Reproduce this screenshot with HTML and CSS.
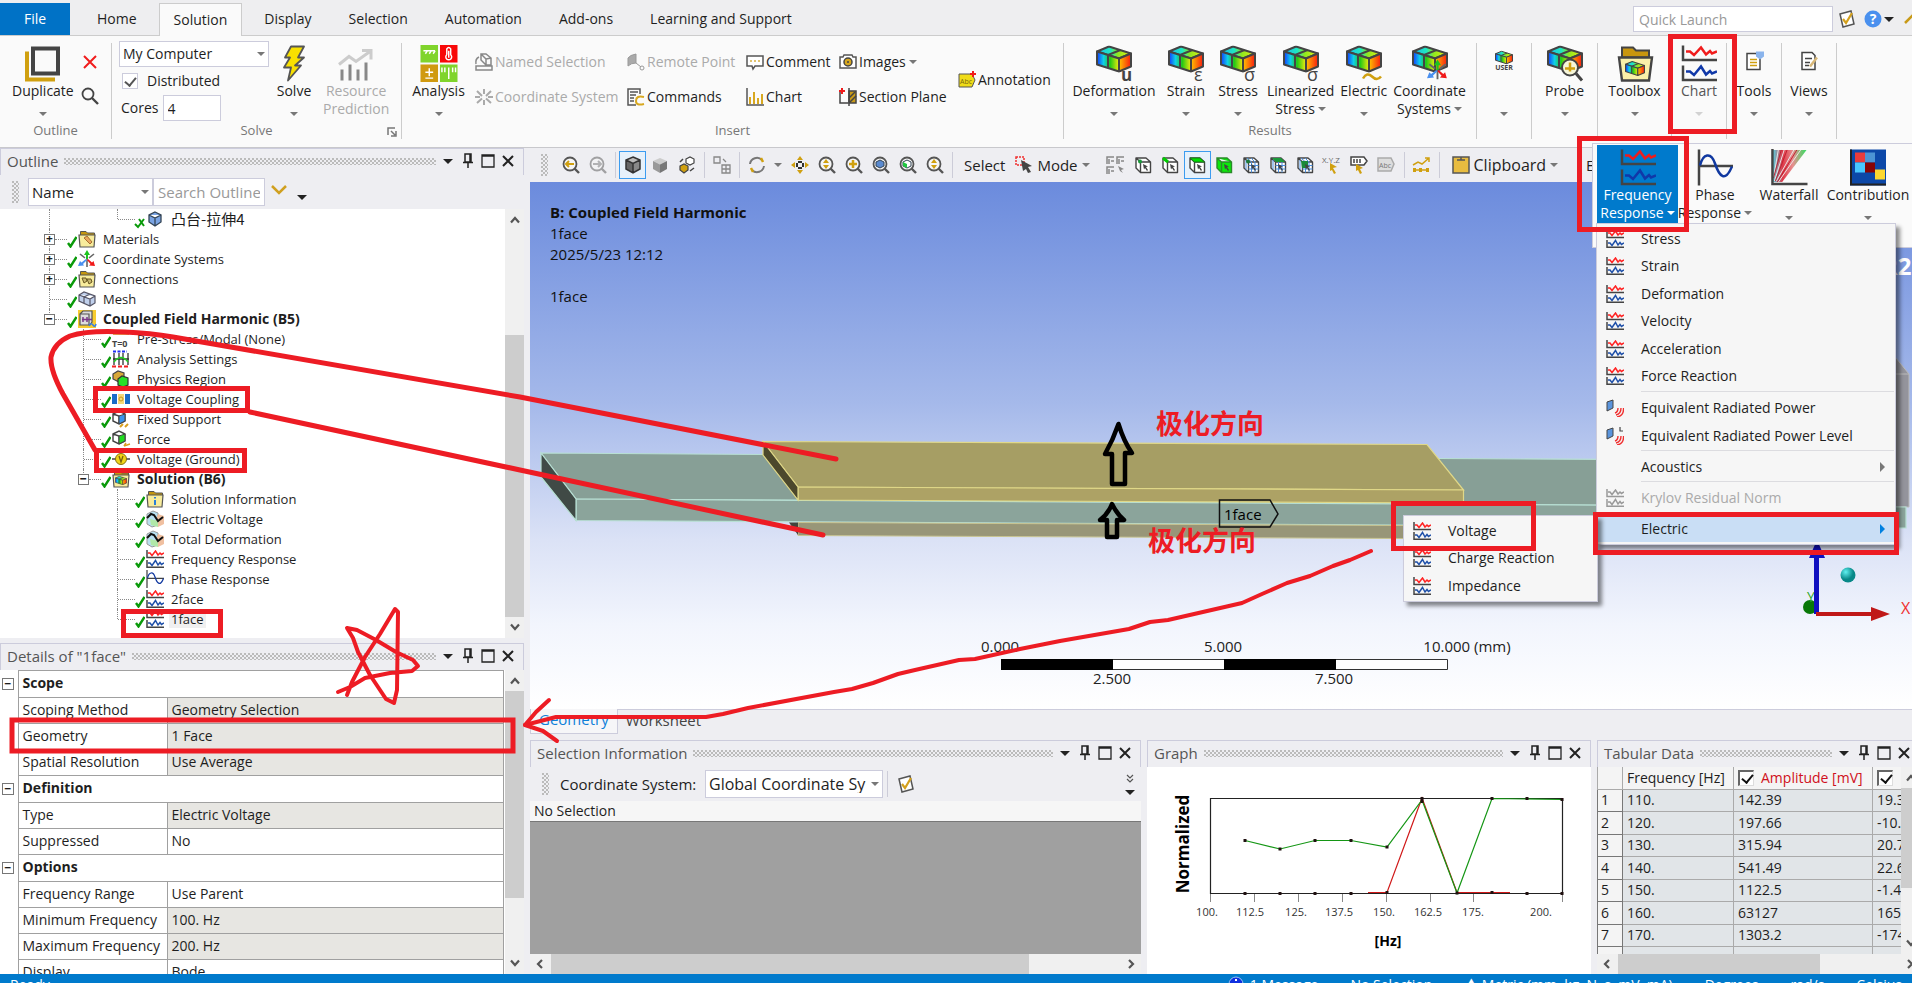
FILE: index.html
```html
<!DOCTYPE html>
<html lang="en">

<head>
  <meta charset="utf-8">
  <title>Mechanical - Coupled Field Harmonic</title>
  <link rel="stylesheet" href="styles.css">
</head>

<body>
  <!-- Shared icons -->
  <svg class="defs" width="0" height="0" aria-hidden="true">
    <defs>
      <linearGradient id="g-front"><stop offset="0" stop-color="#1238ff"/><stop offset=".3" stop-color="#10d0e8"/><stop offset=".6" stop-color="#22c814"/><stop offset="1" stop-color="#f4ec10"/></linearGradient>
      <linearGradient id="g-side"><stop offset="0" stop-color="#ffc400"/><stop offset="1" stop-color="#f81c10"/></linearGradient>
      <linearGradient id="g-top"><stop offset="0" stop-color="#18b8f0"/><stop offset=".4" stop-color="#20e8c0"/><stop offset=".6" stop-color="#8ce820"/><stop offset="1" stop-color="#e8f010"/></linearGradient>
      <linearGradient id="g-fall"><stop offset="0" stop-color="#50d8e8"/><stop offset=".3" stop-color="#e03848"/><stop offset=".6" stop-color="#e89090"/><stop offset="1" stop-color="#30e060"/></linearGradient>
      <symbol id="block" viewBox="0 0 36 27"><g stroke="#444" stroke-width="2" stroke-linejoin="round"><path fill="url(#g-top)" d="M1 6 13 1 35 8 23 13z"/><path fill="url(#g-front)" d="M1 6 23 13V26L1 19z"/><path fill="url(#g-side)" d="M23 13 35 8V21L23 26z"/><path fill="none" d="M12 9.500V22.500M12 9.500 24.500 4.500"/></g></symbol>
      <symbol id="freq" viewBox="0 0 18 18"><path fill="none" stroke="#444" stroke-width="1.500" d="M1 0V7.500H18M1 10V17.200H18"/><path fill="none" stroke="#f22" stroke-width="1.500" d="M2 3H4L6 5.500 9.500 1 12 5 14 3 15.500 4.500 18 3"/><path fill="none" stroke="#1e4fa8" stroke-width="1.500" d="M2 13H4L6 15.500 9.500 10.500 12 15 14 12.500 15.500 14.500 18 13"/></symbol>
      <symbol id="freq-off" viewBox="0 0 18 18"><path fill="none" stroke="#999" stroke-width="1.500" d="M1 0V7.500H18M1 10V17.200H18M2 3H4L6 5.500 9.500 1 12 5 14 3 15.500 4.500 18 3M2 13H4L6 15.500 9.500 10.500 12 15 14 12.500 15.500 14.500 18 13"/></symbol>
      <symbol id="freq-lg" viewBox="0 0 36 36"><path fill="none" stroke="#444" stroke-width="2.500" d="M2 0V14.500H36M2 20V34.500H36"/><path fill="none" stroke="#f01c1c" stroke-width="2.500" d="M5 6H9L13 9.500 20 2 25 9 29 5.500 31 8 36 6"/><path fill="none" stroke="#1038a8" stroke-width="2.500" d="M5 26H9L13 29.500 20 21 25 29 29 25.500 31 28 36 26"/></symbol>
      <symbol id="check" viewBox="0 0 10 12"><path fill="none" stroke="#0a9a0a" stroke-width="2.400" d="M1 7 3.500 10.500 9.500 1"/></symbol>
      <symbol id="folder" viewBox="0 0 18 18"><path fill="#c4960e" stroke="#555" d="M2.500 5V1.500H8L9.500 3H16.500V5"/><path fill="#f8ec9c" stroke="#555" stroke-width="1.200" d="M1 5H17L16 17H2z"/></symbol>
      <symbol id="cube" viewBox="0 0 18 18"><path fill="#fff" stroke="#444" stroke-width="1.400" stroke-linejoin="round" d="M2 2H12L16.500 6V16.500H6.500L2 12zM2 2 6.500 6H16.500M6.500 6V16.500"/></symbol>
      <symbol id="pick" viewBox="0 0 18 18"><path fill="#444" d="M9 8 14 10.500 12 11 14 14 13 15 11 12 10 13.500z"/></symbol>
      <symbol id="grid-lines" viewBox="0 0 18 18"><path fill="none" stroke="#4a8ee0" d="M9.500 6V16.500M13 6V16.500M6.500 9.500H16.500M6.500 13H16.500M5 2 9.500 6M9 2 13 6M4 4V13.500"/></symbol>
      <symbol id="mag" viewBox="0 0 18 18"><circle cx="8" cy="8" r="6.500" fill="#f6f6f6" stroke="#555" stroke-width="1.800"/><path stroke="#555" stroke-width="2.400" d="M12.500 12.500 17 17"/></symbol>
      <symbol id="iso" viewBox="0 0 18 18"><path fill="#888" d="M9 1 16 4V13L9 17 2 13V4z"/><path fill="#bbb" d="M9 1 16 4 9 7.500 2 4z"/><path fill="#666" d="M2 4 9 7.500V17L2 13z"/></symbol>
      <symbol id="axes" viewBox="0 0 18 18"><path stroke="#666" stroke-width="1.600" d="M2 4 7 8M16 4 11 8M9 9V17"/><path fill="#1ec41e" d="M9 0 12 5H10V9H8V5H6z"/><path fill="#4a90f0" d="M0 16 2 11 3.500 12.500 8 9 9 10 5 14 6 15.500z"/><path fill="#f01818" d="M17 16 11 15.500 12.500 14 9 10 10 9 14 12.500 15.500 11z"/></symbol>
      <symbol id="axes-off" viewBox="0 0 18 18"><path stroke="#aaa" stroke-width="2" d="M2 3 7 8M16 3 11 8M9 1V6M9 17V12M2 15 7 10.500M16 15 11 10.500M0 9H5M13 9H18"/></symbol>
      <symbol id="pin" viewBox="0 0 12 16"><path fill="none" stroke="#222" stroke-width="1.500" d="M3 1H9V9H3zM1 9.500H11M6 10V15M8 1V9"/></symbol>
      <symbol id="max" viewBox="0 0 14 14"><path fill="none" stroke="#222" stroke-width="1.300" d="M1 1H13V13H1zM1 2H13"/></symbol>
      <symbol id="close" viewBox="0 0 12 12"><path stroke="#222" stroke-width="2" d="M1 1 11 11M11 1 1 11"/></symbol>
      <symbol id="tick-box" viewBox="0 0 18 18"><path fill="#fff" stroke="#555" stroke-width="1.500" d="M2 4 13 1 16 14 5 17z"/><path fill="none" stroke="#d4a01c" stroke-width="2.200" d="M5 9 8 13 14 3"/></symbol>
      <symbol id="phase" viewBox="0 0 36 36"><path fill="none" stroke="#444" stroke-width="2.500" d="M2 0V36M2 16.500H36"/><path fill="none" stroke="#1038a0" stroke-width="2.500" d="M3 16C6 4 14 2 18 14S28 34 35 17"/></symbol>
      <symbol id="wave-cube" viewBox="0 0 18 18"><path fill="#b8e0f0" stroke="#999" d="M1 4 7 1 12 3V15L6 17 1 14z"/><path fill="#f0c0a0" d="M12 4 18 6V14L12 17 8 15z"/><path fill="#b0e8a8" d="M4 9 12 11V17L5 15z"/><path fill="none" stroke="#111" stroke-width="2" d="M1 8 5 4 8 5 12 11 17 7"/></symbol>
      <symbol id="up" viewBox="0 0 10 10"><path fill="none" stroke="#555" stroke-width="2.200" d="M1 7.500 5 3 9 7.500"/></symbol>
      <symbol id="down" viewBox="0 0 10 10"><path fill="none" stroke="#555" stroke-width="2.200" d="M1 2.500 5 7 9 2.500"/></symbol>
      <symbol id="left" viewBox="0 0 10 10"><path fill="none" stroke="#555" stroke-width="2.200" d="M7 1 3 5 7 9"/></symbol>
      <symbol id="right" viewBox="0 0 10 10"><path fill="none" stroke="#555" stroke-width="2.200" d="M3 1 7 5 3 9"/></symbol>
      <symbol id="radiate" viewBox="0 0 18 18"><path fill="#5a94dc" stroke="#444" d="M1 3 7 1V9L1 12z"/><path fill="none" stroke="#f03030" stroke-width="1.400" d="M9 14Q12 13 12 9M10 16Q15 15 15 9M11 18Q18 17 17.500 9"/></symbol>
    </defs>
  </svg>

  <div class="app">
    <!-- Ribbon tabs -->
    <header class="tabs">
      <button class="tab file">File</button>
      <button class="tab">Home</button>
      <button class="tab active">Solution</button>
      <button class="tab">Display</button>
      <button class="tab">Selection</button>
      <button class="tab">Automation</button>
      <button class="tab">Add-ons</button>
      <button class="tab">Learning and Support</button>
      <div class="quick">
        <input type="text" placeholder="Quick Launch" aria-label="Quick Launch">
        <svg width="18" height="18"><use href="#tick-box"/></svg>
        <svg class="help" width="18" height="18" viewBox="0 0 18 18"><circle cx="9" cy="9" r="8.500" fill="#4a90ee"/><text x="9" y="14" text-anchor="middle" font-size="14" font-weight="bold" fill="#fff">?</text></svg>
        <i class="caret dark"></i>
        <svg class="collapse" width="16" height="10" viewBox="0 0 16 10"><path fill="none" stroke="#c89a18" stroke-width="2.500" d="M1 9 8 2 15 9"/></svg>
      </div>
    </header>

    <!-- Ribbon -->
    <div class="ribbon">
      <section class="group g-outline">
        <div class="group-body">
          <button class="big">
            <svg width="36" height="36" viewBox="0 0 36 36"><path fill="none" stroke="#d0a010" stroke-width="4" d="M2 6V34H30"/><path fill="#fafafa" stroke="#444" stroke-width="4" d="M8 3H33V28H8z"/></svg>
            <span>Duplicate</span><i class="caret"></i>
          </button>
          <div class="mini">
            <button aria-label="Delete"><svg width="16" height="16" viewBox="0 0 16 16"><path stroke="#f01c1c" stroke-width="2" d="M2 2 14 14M14 2 2 14"/></svg></button>
            <button aria-label="Find"><svg width="18" height="18" viewBox="0 0 18 18"><circle cx="7" cy="7" r="5.500" fill="none" stroke="#444" stroke-width="1.800"/><path stroke="#444" stroke-width="2.400" d="M11 11 17 17"/></svg></button>
          </div>
        </div>
        <h3>Outline</h3>
      </section>

      <section class="group g-solve">
        <div class="group-body">
          <div class="fields">
            <div class="select"><select aria-label="Solve on"><option>My Computer</option></select></div>
            <label class="dist"><input type="checkbox" checked> Distributed</label>
            <label class="cores">Cores <input type="text" value="4"></label>
          </div>
          <button class="big">
            <svg width="36" height="36" viewBox="0 0 36 36"><path fill="#f8e000" stroke="#555" stroke-width="1.800" stroke-linejoin="round" d="M15 1H28L22 12H28L19 20H25L12 35 15 22H8L14 12H9z"/></svg>
            <span>Solve</span><i class="caret"></i>
          </button>
          <button class="big off">
            <svg width="36" height="36" viewBox="0 0 36 36"><path stroke="#888" stroke-width="3" d="M4 35V24M12 35V19M20 35V24M28 35V17"/><path fill="none" stroke="#ccc" stroke-width="3" d="M1 19 11 11 18 16 32 6M24 5H33V14"/></svg>
            <span>Resource<br>Prediction</span>
          </button>
        </div>
        <h3>Solve</h3>
        <svg class="launcher" width="10" height="10" viewBox="0 0 10 10"><path fill="none" stroke="#777" stroke-width="1.500" d="M1 8V1H8M4 4 8 8M9 4V9H4"/></svg>
      </section>

      <section class="group g-insert">
        <div class="group-body">
          <button class="big">
            <svg width="38" height="38" viewBox="0 0 38 38"><path fill="#80d42c" d="M0 0H18V18H0zM20 20H38V38H20z"/><path fill="#f80808" d="M20 0H38V18H20z"/><path fill="#d09a10" d="M0 20H18V38H0z"/><path fill="none" stroke="#fff" stroke-width="1.500" d="M3 6H15M5 9 7 6M9 9 11 6M13 9 15 6M5 28H13M9 24V32M5 34H13M22 23V28M25 23V28M29 23V35M33 23V28M36 23V28"/><path fill="none" stroke="#fff" stroke-width="1.500" d="M27 10V4Q29 1 31 4V10A3 3 0 1 1 27 10M29 6V13"/></svg>
            <span>Analysis</span><i class="caret"></i>
          </button>
          <div class="cols">
            <button class="item off"><svg width="18" height="18" viewBox="0 0 18 18"><path fill="none" stroke="#888" stroke-width="1.500" d="M1 13H17V17H1zM6 1H11L16 5V12H11L6 7zM6 1 11 6V12M11 6 16 5M1 11Q0 6 4 4"/></svg>Named Selection</button>
            <button class="item off"><svg width="18" height="18" viewBox="0 0 18 18"><path fill="#aaa" stroke="#999" d="M1 5Q3 2 9 1V10Q4 10 1 13z"/><path stroke="#999" d="M9 10 14 14"/><circle cx="15" cy="15" r="2" fill="none" stroke="#999"/></svg>Remote Point</button>
            <button class="item"><svg width="18" height="18" viewBox="0 0 18 18"><path fill="#fff" stroke="#555" stroke-width="1.500" d="M1 3H17V13H9L7 16 6 13H1z"/><path stroke="#d8b040" stroke-width="1.500" stroke-dasharray="2 2" d="M4 8H15"/></svg>Comment</button>
            <button class="item"><svg width="18" height="18" viewBox="0 0 18 18"><path fill="#fff" stroke="#555" stroke-width="1.500" d="M1 4H4L5 2H13L14 4H17V15H1z"/><circle cx="9" cy="9" r="4" fill="#d8a820" stroke="#444" stroke-width="1.500"/><circle cx="9" cy="9" r="1" fill="#444"/></svg>Images<i class="caret"></i></button>
            <button class="item off"><svg width="18" height="18"><use href="#axes-off"/></svg>Coordinate System</button>
            <button class="item"><svg width="18" height="18" viewBox="0 0 18 18"><path fill="none" stroke="#555" stroke-width="1.500" d="M9 17H1V1H13V6M3 4H11M3 7H9M3 10H7M3 13H7"/><path fill="none" stroke="#d8a820" stroke-width="2" d="M17 9Q9 7 9 13 9 18 17 16"/></svg>Commands</button>
            <button class="item"><svg width="18" height="18" viewBox="0 0 18 18"><path fill="none" stroke="#555" stroke-width="1.500" d="M1 0V17H18"/><path stroke="#d8a820" stroke-width="2" d="M4 16V9M8 16V4M12 16V10M16 16V6"/></svg>Chart</button>
            <button class="item"><svg width="18" height="18" viewBox="0 0 18 18"><path fill="none" stroke="#444" stroke-width="1.500" d="M5 3H1V15H9"/><path fill="#c89a18" stroke="#444" stroke-width="1.500" d="M10 3H17V15H10z"/><path stroke="#444" stroke-width="1.500" d="M10 0V18M10 10 16 4M10 15 17 8"/><path stroke="#f01c1c" stroke-width="2" d="M0 3H6M3 0V6"/></svg>Section Plane</button>
          </div>
          <button class="item annotation"><svg width="18" height="18" viewBox="0 0 18 18"><path fill="#f0dc18" stroke="#555" d="M1 3H14L17 9 14 16H1z"/><text x="2" y="13" font-size="7" fill="#7a6a10">Abc</text><path stroke="#f01c1c" stroke-width="2" d="M12 3H18M15 0V6"/></svg>Annotation</button>
        </div>
        <h3>Insert</h3>
      </section>

      <section class="group g-results">
        <div class="group-body">
          <button class="big"><svg width="36" height="36" viewBox="0 0 36 36"><use href="#block" width="36" height="27"/><text x="25" y="35" font-size="17" font-weight="bold" fill="#444">u</text></svg><span>Deformation</span><i class="caret"></i></button>
          <button class="big"><svg width="36" height="36" viewBox="0 0 36 36"><use href="#block" width="36" height="27"/><text x="26" y="35" font-size="18" fill="#444">ε</text></svg><span>Strain</span><i class="caret"></i></button>
          <button class="big"><svg width="36" height="36" viewBox="0 0 36 36"><use href="#block" width="36" height="27"/><text x="24" y="35" font-size="18" fill="#444">σ</text></svg><span>Stress</span><i class="caret"></i></button>
          <button class="big"><svg width="36" height="36" viewBox="0 0 36 36"><use href="#block" width="36" height="27"/><text x="24" y="35" font-size="18" fill="#444">σ</text></svg><span>Linearized<br>Stress<i class="caret in"></i></span></button>
          <button class="big"><svg width="36" height="36" viewBox="0 0 36 36"><use href="#block" width="36" height="27"/><path fill="none" stroke="#d0a010" stroke-width="2.500" d="M17 33Q21 26 26 31T35 31"/></svg><span>Electric</span><i class="caret"></i></button>
          <button class="big"><svg width="36" height="36" viewBox="0 0 36 36"><use href="#block" width="36" height="27"/><use href="#axes" x="15" y="13" width="21" height="23"/></svg><span>Coordinate<br>Systems<i class="caret in"></i></span></button>
        </div>
        <h3>Results</h3>
      </section>

      <section class="group g-one">
        <button class="big"><svg width="36" height="36" viewBox="0 0 36 36"><use href="#block" x="9" y="5" width="18" height="14"/><text x="18" y="24" text-anchor="middle" font-size="7" font-weight="bold" fill="#444">USER</text></svg><span>&nbsp;</span><i class="caret"></i></button>
      </section>
      <section class="group g-probe">
        <button class="big"><svg width="36" height="36" viewBox="0 0 36 36"><use href="#block" width="36" height="27"/><circle cx="23" cy="22" r="8" fill="#f6f6d8" stroke="#444" stroke-width="2"/><path stroke="#444" stroke-width="3" d="M29 28 35 35"/><path stroke="#d0a010" stroke-width="2.500" d="M18 23H28M23 17V26"/></svg><span>Probe</span><i class="caret"></i></button>
      </section>
      <section class="group g-toolbox">
        <button class="big"><svg width="36" height="36" viewBox="0 0 36 36"><path fill="#c8960e" stroke="#444" stroke-width="2" d="M5 12V2H16L19 5H32V12z"/><path fill="#faf0a8" stroke="#444" stroke-width="2.400" d="M2 12H35L32 35H5z"/><use href="#block" x="8" y="15" width="20" height="16"/></svg><span>Toolbox</span><i class="caret"></i></button>
      </section>
      <section class="group g-one">
        <button class="big pressed"><svg width="36" height="36"><use href="#freq-lg"/></svg><span>Chart</span><i class="caret"></i></button>
      </section>
      <section class="group g-one">
        <button class="big"><svg width="36" height="36" viewBox="0 0 36 36"><path fill="#fff" stroke="#444" stroke-width="1.500" d="M11 8H20L24 12V24H11z"/><path stroke="#d0a010" stroke-width="1.500" d="M14 14H21M14 17H21M14 20H21"/><path fill="#8ab4ec" d="M20 6H28V11L24 14 20 11z"/></svg><span>Tools</span><i class="caret"></i></button>
      </section>
      <section class="group g-one">
        <button class="big"><svg width="36" height="36" viewBox="0 0 36 36"><path fill="#fff" stroke="#444" stroke-width="1.500" d="M11 7H21L24 10V24H11z"/><path stroke="#444" stroke-width="1.500" d="M14 13H21M14 17H19M14 20H18"/><path stroke="#d8b878" stroke-width="2.500" d="M19 21 26 12"/></svg><span>Views</span><i class="caret"></i></button>
      </section>
    </div>

    <main class="workspace">
      <aside class="side">
        <!-- Outline tree -->
        <section class="panel outline">
          <div class="panel-head">
            <h2>Outline</h2><span class="dots"></span>
            <button aria-label="Menu"><i class="caret dark"></i></button><button aria-label="Pin"><svg width="12" height="16"><use href="#pin"/></svg></button><button aria-label="Maximize"><svg width="14" height="14"><use href="#max"/></svg></button><button aria-label="Close"><svg width="12" height="12"><use href="#close"/></svg></button>
          </div>
          <div class="filter">
            <span class="grip"></span>
            <div class="select"><select aria-label="Filter by"><option>Name</option></select></div>
            <input type="text" placeholder="Search Outline" aria-label="Search Outline">
            <svg class="expand" width="16" height="10" viewBox="0 0 16 10"><path fill="none" stroke="#d0a020" stroke-width="2.500" d="M1 1 8 8 15 1"/></svg>
            <i class="caret dark"></i>
          </div>
          <div class="scroll-area">
            <ul class="tree">
              <li>
                <ul class="deep"><li><div class="row cjk"><i class="stub"></i><svg width="10" height="12" viewBox="0 0 10 12"><path fill="none" stroke="#0a9a0a" stroke-width="2" d="M0 8 3 11 9 3M4 3 9 10"/></svg><svg width="18" height="18" viewBox="0 0 18 18"><path fill="#7aa4e4" stroke="#345" stroke-width="1.300" d="M9 2 15 5V12L9 16 3 12V5zM3 5 9 8 15 5M9 8V16"/></svg><span>凸台-拉伸4</span></div></li></ul>
              </li>
              <li><div class="row"><b class="box">+</b><i class="dash"></i><svg width="10" height="12"><use href="#check"/></svg><svg width="18" height="18" viewBox="0 0 18 18"><use href="#folder"/><path fill="#e8a860" stroke="#a67030" d="M6 8 9 6 14 12 12 14z"/></svg><span>Materials</span></div></li>
              <li><div class="row"><b class="box">+</b><i class="dash"></i><svg width="10" height="12"><use href="#check"/></svg><svg width="18" height="18"><use href="#axes"/></svg><span>Coordinate Systems</span></div></li>
              <li><div class="row"><b class="box">+</b><i class="dash"></i><svg width="10" height="12"><use href="#check"/></svg><svg width="18" height="18" viewBox="0 0 18 18"><use href="#folder"/><path fill="#c8b870" stroke="#665520" d="M4 8 8 8 9 11 6 13zM9 9 13 9 14 12 11 14z"/></svg><span>Connections</span></div></li>
              <li><div class="row"><i class="stub"></i><svg width="10" height="12"><use href="#check"/></svg><svg width="18" height="18" viewBox="0 0 18 18"><path fill="#c0d0ec" stroke="#556" stroke-width="1.200" d="M1 5 6 2 17 6V13L12 16 1 11zM1 5 12 9 17 6M12 9V16M6 7V13M6 7 12 4"/></svg><span>Mesh</span></div></li>
              <li>
                <div class="row bold"><b class="box">−</b><i class="dash"></i><svg width="10" height="12"><use href="#check"/></svg><svg width="18" height="18" viewBox="0 0 18 18"><path fill="#f8cc30" d="M0 0H18V18H0z"/><path fill="#ddd" stroke="#555" stroke-width="1.200" d="M2 4 5 1H14V12L12 15H2zM2 4H11V15"/><path stroke="#7a3a8a" stroke-width="1.500" d="M5 7V12M9 7V12M4 9.500H14"/><path fill="none" stroke="#3a80e0" stroke-width="1.500" d="M11 16Q13 12 15 15T18 14"/></svg><span>Coupled Field Harmonic (B5)</span></div>
                <ul>
                  <li><div class="row"><i class="stub"></i><svg width="10" height="12"><use href="#check"/></svg><svg width="18" height="18" viewBox="0 0 18 18"><path stroke="#d8a020" stroke-width="1.500" d="M1 4H17M13 1 17 4"/><text x="0" y="17" font-size="9" font-weight="bold" fill="#444">T=0</text></svg><span>Pre-Stress/Modal (None)</span></div></li>
                  <li><div class="row"><i class="stub"></i><svg width="10" height="12"><use href="#check"/></svg><svg width="18" height="18" viewBox="0 0 18 18"><path fill="none" stroke="#333" stroke-width="1.300" d="M2 3V15M7 3V15M11 3V15M16 3V15M1 9H17"/><path stroke="#2030f0" stroke-width="2" stroke-dasharray="3 1.500" d="M1 1.500H15"/><path stroke="#f02020" stroke-width="2" stroke-dasharray="4 2" d="M0 16.500H18"/><path fill="none" stroke="#20d020" stroke-width="1.500" d="M2 12Q9 3 16 12"/></svg><span>Analysis Settings</span></div></li>
                  <li><div class="row"><i class="stub"></i><svg width="10" height="12"><use href="#check"/></svg><svg width="18" height="18" viewBox="0 0 18 18"><path fill="#d8a838" stroke="#444" stroke-width="1.200" d="M1 4 6 1 12 3V10L7 12 1 9z"/><path fill="#28e028" stroke="#333" stroke-width="1.200" d="M6 9 10 6 16 8V15L11 17 6 15z"/></svg><span>Physics Region</span></div></li>
                  <li><div class="row"><i class="stub"></i><svg width="10" height="12"><use href="#check"/></svg><svg width="18" height="18" viewBox="0 0 18 18"><path fill="#1a6cc8" d="M0 4H5V14H0zM13 4H18V14H13z"/><path fill="#f4d878" d="M6 4H12V14H6z"/><circle cx="9" cy="9" r="2" fill="none" stroke="#c8961c"/></svg><span>Voltage Coupling</span></div></li>
                  <li><div class="row"><i class="stub"></i><svg width="10" height="12"><use href="#check"/></svg><svg width="18" height="18" viewBox="0 0 18 18"><path fill="#fff" stroke="#444" stroke-width="1.400" d="M1 4 7 1 13 4V11L7 14 1 11zM1 4 7 6V14"/><path fill="#3a94ec" stroke="#444" d="M7 6 13 4V11L7 14z"/><path stroke="#d8a020" stroke-width="2" d="M8 17 11 14M13 17 16 14"/></svg><span>Fixed Support</span></div></li>
                  <li><div class="row"><i class="stub"></i><svg width="10" height="12"><use href="#check"/></svg><svg width="18" height="18" viewBox="0 0 18 18"><path fill="#fff" stroke="#444" stroke-width="1.400" d="M1 4 7 1 13 4V11L7 14 1 11zM1 4 7 6V14"/><path fill="#20dc20" stroke="#444" d="M7 6 13 4V11L7 14z"/><path stroke="#d8a020" stroke-width="1.500" d="M12 16 18 14M12 16 14 13"/></svg><span>Force</span></div></li>
                  <li><div class="row"><i class="stub"></i><svg width="10" height="12"><use href="#check"/></svg><svg width="18" height="18" viewBox="0 0 18 18"><path stroke="#444" stroke-width="1.500" d="M0 9H18"/><circle cx="9" cy="9" r="5.500" fill="#f0d418" stroke="#887010"/><path fill="none" stroke="#776010" stroke-width="1.300" d="M7 6 9 12 11 6"/></svg><span>Voltage (Ground)</span></div></li>
                  <li>
                    <div class="row bold"><b class="box">−</b><i class="dash"></i><svg width="10" height="12"><use href="#check"/></svg><svg width="18" height="18" viewBox="0 0 18 18"><use href="#folder"/><use href="#block" x="3" y="6" width="12" height="9"/></svg><span>Solution (B6)</span></div>
                    <ul>
                      <li><div class="row"><i class="stub"></i><svg width="10" height="12"><use href="#check"/></svg><svg width="18" height="18" viewBox="0 0 18 18"><use href="#folder"/><path stroke="#2a80d8" stroke-width="2" d="M9 7V8.500M9 10V15"/></svg><span>Solution Information</span></div></li>
                      <li><div class="row"><i class="stub"></i><svg width="10" height="12"><use href="#check"/></svg><svg width="18" height="18"><use href="#wave-cube"/></svg><span>Electric Voltage</span></div></li>
                      <li><div class="row"><i class="stub"></i><svg width="10" height="12"><use href="#check"/></svg><svg width="18" height="18"><use href="#wave-cube"/></svg><span>Total Deformation</span></div></li>
                      <li><div class="row"><i class="stub"></i><svg width="10" height="12"><use href="#check"/></svg><svg width="18" height="18"><use href="#freq"/></svg><span>Frequency Response</span></div></li>
                      <li><div class="row"><i class="stub"></i><svg width="10" height="12"><use href="#check"/></svg><svg width="18" height="18"><use href="#phase"/></svg><span>Phase Response</span></div></li>
                      <li><div class="row"><i class="stub"></i><svg width="10" height="12"><use href="#check"/></svg><svg width="18" height="18"><use href="#freq"/></svg><span>2face</span></div></li>
                      <li><div class="row current"><i class="stub"></i><svg width="10" height="12"><use href="#check"/></svg><svg width="18" height="18"><use href="#freq"/></svg><span>1face</span></div></li>
                    </ul>
                  </li>
                </ul>
              </li>
            </ul>
            <div class="vscroll s-tree"><svg width="10" height="10"><use href="#up"/></svg><div class="track"><div class="thumb"></div></div><svg width="10" height="10"><use href="#down"/></svg></div>
          </div>
        </section>

        <!-- Details -->
        <section class="panel details">
          <div class="panel-head">
            <h2>Details of "1face"</h2><span class="dots"></span>
            <button aria-label="Menu"><i class="caret dark"></i></button><button aria-label="Pin"><svg width="12" height="16"><use href="#pin"/></svg></button><button aria-label="Maximize"><svg width="14" height="14"><use href="#max"/></svg></button><button aria-label="Close"><svg width="12" height="12"><use href="#close"/></svg></button>
          </div>
          <div class="scroll-area">
            <div class="props-wrap">
              <table class="props">
                <colgroup><col class="c-exp"><col class="c-name"><col></colgroup>
                <tr class="cat"><td><b class="box">−</b></td><th colspan="2">Scope</th></tr>
                <tr><td></td><td>Scoping Method</td><td class="ro">Geometry Selection</td></tr>
                <tr><td></td><td>Geometry</td><td class="ro">1 Face</td></tr>
                <tr><td></td><td>Spatial Resolution</td><td class="ro">Use Average</td></tr>
                <tr class="cat"><td><b class="box">−</b></td><th colspan="2">Definition</th></tr>
                <tr><td></td><td>Type</td><td class="ro">Electric Voltage</td></tr>
                <tr><td></td><td>Suppressed</td><td>No</td></tr>
                <tr class="cat"><td><b class="box">−</b></td><th colspan="2">Options</th></tr>
                <tr><td></td><td>Frequency Range</td><td>Use Parent</td></tr>
                <tr><td></td><td>Minimum Frequency</td><td class="ro">100. Hz</td></tr>
                <tr><td></td><td>Maximum Frequency</td><td class="ro">200. Hz</td></tr>
                <tr><td></td><td>Display</td><td>Bode</td></tr>
              </table>
            </div>
            <div class="vscroll s-details"><svg width="10" height="10"><use href="#up"/></svg><div class="track"><div class="thumb"></div></div><svg width="10" height="10"><use href="#down"/></svg></div>
          </div>
        </section>
      </aside>

      <div class="center">
        <!-- Graphics toolbar -->
        <div class="toolbar">
          <span class="grip"></span>
          <button aria-label="Previous view"><svg width="18" height="18" viewBox="0 0 18 18"><use href="#mag"/><path stroke="#d0a010" stroke-width="2" d="M4 8H12M7 5 4 8 7 11" fill="none"/></svg></button>
          <button class="off" aria-label="Next view"><svg width="18" height="18" viewBox="0 0 18 18" opacity=".5"><use href="#mag"/><path stroke="#777" stroke-width="2" d="M4 8H12M9 5 12 8 9 11" fill="none"/></svg></button>
          <i class="sep"></i>
          <button class="on" aria-label="Shaded with edges"><svg width="18" height="18" viewBox="0 0 18 18"><use href="#iso"/><path fill="none" stroke="#333" stroke-width="1.500" d="M9 1 16 4V13L9 17 2 13V4zM2 4 9 7.500 16 4M9 7.500V17"/></svg></button>
          <button aria-label="Shaded"><svg width="18" height="18" viewBox="0 0 18 18"><path fill="#ccc" d="M9 2 16 5 9 8.500 2 5z"/><path fill="#999" d="M2 5 9 8.500V17L2 13z"/><path fill="#777" d="M16 5 9 8.500V17L16 13z"/></svg></button>
          <button aria-label="Swap bodies"><svg width="18" height="18" viewBox="0 0 18 18"><path fill="#fff" stroke="#444" stroke-width="1.200" d="M8 3 12 1 16 3V7L12 9 8 7z"/><path fill="#d0a010" stroke="#444" stroke-width="1.200" d="M2 10 6 8 10 10V14L6 17 2 14z"/><path fill="none" stroke="#444" stroke-width="1.500" d="M2 6 5 3M12 15 16 12"/></svg></button>
          <i class="sep"></i>
          <button aria-label="Windows"><svg width="18" height="18" viewBox="0 0 18 18"><path fill="none" stroke="#888" stroke-width="1.300" d="M1 1H7V7H1zM9 9H17V17H9zM13 9V17M9 13H17M10 3 13 6"/></svg></button>
          <i class="sep"></i>
          <button aria-label="Rotate"><svg width="18" height="18" viewBox="0 0 18 18"><path fill="none" stroke="#777" stroke-width="2" d="M2 8A7 7 0 0 1 14 4M16 10A7 7 0 0 1 4 14"/><path stroke="#d0a010" stroke-width="2.500" d="M13 2 15 6M3 12 5 16"/></svg></button>
          <i class="caret"></i>
          <button aria-label="Pan"><svg width="18" height="18" viewBox="0 0 18 18"><path fill="#d0a010" d="M9 0 12 4H6zM9 18 12 14H6zM0 9 4 6V12zM18 9 14 6V12z"/><path fill="#333" d="M7 5H11V7H7zM7 11H11V13H7zM5 7H7V11H5zM11 7H13V11H11z"/></svg></button>
          <button aria-label="Zoom"><svg width="18" height="18" viewBox="0 0 18 18"><use href="#mag"/><path fill="#d0a010" d="M8 3 11 7H5zM8 13 11 9H5z"/></svg></button>
          <button aria-label="Zoom in"><svg width="18" height="18" viewBox="0 0 18 18"><use href="#mag"/><path stroke="#d0a010" stroke-width="2.500" d="M4 8H12M8 4V12"/></svg></button>
          <button aria-label="Zoom to fit"><svg width="18" height="18" viewBox="0 0 18 18"><use href="#mag"/><path fill="#5a8ad0" stroke="#345" d="M8 4 12 6V10L8 12 4 10V6z"/></svg></button>
          <button aria-label="Zoom to selection"><svg width="18" height="18" viewBox="0 0 18 18"><use href="#mag"/><path fill="#fff" stroke="#345" d="M8 4 12 6V10L8 12 4 10V6z"/><path fill="#20c840" d="M4 6 8 8V12L4 10z"/></svg></button>
          <button aria-label="Box zoom"><svg width="18" height="18" viewBox="0 0 18 18"><use href="#mag"/><path fill="#d0a010" d="M8 3 11 7H5zM8 13 11 9H5z"/></svg></button>
          <i class="sep"></i>
          <span class="text">Select</span>
          <button class="wide"><svg width="18" height="18" viewBox="0 0 18 18"><path fill="none" stroke="#f03030" stroke-width="1.500" stroke-dasharray="2 1" d="M1 1H9V9H1z"/><path fill="#444" d="M6 4 17 10 13 11 16 16 13 17 11 13 8 15z"/></svg>Mode<i class="caret"></i></button>
          <button aria-label="Select pattern"><svg width="20" height="18" viewBox="0 0 20 18"><path fill="none" stroke="#888" stroke-width="1.500" d="M1 8V1H8M3 8V3M5 5H8M11 8V1H18M13 8V3M15 5H18M1 18V11H8M3 18V13M5 15H8"/><path fill="#888" d="M12 10 18 13 15 14 17 17 14 15z"/></svg></button>
          <button aria-label="Vertex"><svg width="18" height="18" viewBox="0 0 18 18"><use href="#cube"/><use href="#pick"/><circle cx="6" cy="5.500" r="2" fill="#1a9a3a"/></svg></button>
          <button aria-label="Edge"><svg width="18" height="18" viewBox="0 0 18 18"><use href="#cube"/><use href="#pick"/><path stroke="#0c0" stroke-width="3" d="M2 2 7 6"/></svg></button>
          <button class="on" aria-label="Face"><svg width="18" height="18" viewBox="0 0 18 18"><use href="#cube"/><path fill="#00e000" stroke="#1a7a1a" d="M2 2H12L16.500 6H6.500z"/><use href="#pick"/></svg></button>
          <button aria-label="Body"><svg width="18" height="18" viewBox="0 0 18 18"><path fill="#0ce80c" stroke="#2a8a2a" stroke-width="1.400" d="M2 2H12L16.500 6V16.500H6.500L2 12zM2 2 6.500 6H16.500M6.500 6V16.500"/><use href="#pick"/></svg></button>
          <button aria-label="Node"><svg width="18" height="18" viewBox="0 0 18 18"><use href="#cube"/><use href="#grid-lines"/><circle cx="6" cy="5.500" r="2" fill="#1a7a3a"/><use href="#pick"/></svg></button>
          <button aria-label="Element face"><svg width="18" height="18" viewBox="0 0 18 18"><use href="#cube"/><use href="#grid-lines"/><path fill="#1a9a3a" d="M3 2H12L16 6H7z"/><use href="#pick"/></svg></button>
          <button aria-label="Element"><svg width="18" height="18" viewBox="0 0 18 18"><use href="#cube"/><use href="#grid-lines"/><path fill="#1a8a3a" d="M5 5H12V12H6z"/><use href="#pick"/></svg></button>
          <button aria-label="Coordinates"><svg width="20" height="18" viewBox="0 0 20 18"><text x="0" y="7" font-size="8" fill="#666">X.Y.Z</text><path fill="#d0a010" d="M8 7 15 11 11 12 14 17 12 18 10 14 8 15z"/></svg></button>
          <button aria-label="Label"><svg width="18" height="18" viewBox="0 0 18 18"><path fill="#fff" stroke="#444" stroke-width="1.500" d="M1 1H14L17 5 14 9H1z"/><path stroke="#444" stroke-width="1.500" d="M4 3V7M7 3V7M10 3V7"/><path fill="#d0a010" d="M6 8 13 12 10 13 12 17 10 18 8 14 6 15z"/></svg></button>
          <button aria-label="Annotation label"><svg width="18" height="18" viewBox="0 0 18 18"><path fill="#ddd" stroke="#aaa" stroke-width="1.500" d="M1 2H14L17 8 14 15H1z"/><text x="2" y="12" font-size="7" fill="#777">Abc</text></svg></button>
          <i class="sep"></i>
          <button aria-label="Chart points"><svg width="18" height="18" viewBox="0 0 18 18"><path fill="none" stroke="#d0a010" stroke-width="1.500" d="M1 9 6 6 10 8 17 2M13 2H17V6M1 14H17"/><path fill="#d0a010" d="M1 12H4V16H1zM7 12H10V16H7zM14 12H17V16H14z"/></svg></button>
          <i class="sep"></i>
          <button class="wide clip"><svg width="18" height="18" viewBox="0 0 18 18"><path fill="#e8bc40" stroke="#555" stroke-width="1.500" d="M1 1H17V17H1z"/><path stroke="#555" stroke-width="1.500" d="M5 4H13M9 1V4"/></svg>Clipboard<i class="caret"></i></button>
          <span class="text">[ Empty ]</span>
        </div>

        <!-- 3D view -->
        <div class="viewport">
          <svg class="scene" viewBox="530 182 1382 527" preserveAspectRatio="xMinYMin slice">
            <defs>
              <radialGradient id="ball" cx=".35" cy=".3"><stop offset="0" stop-color="#60f0f0"/><stop offset="1" stop-color="#088888"/></radialGradient>
            </defs>
            <!-- block at the far end -->
            <path fill="#94949c" stroke="#bbb" d="M1880 374V507H1909V374L1896 358 1880 358z"/>
            <path fill="none" stroke="#bbb" d="M1890 374H1909"/>
            <!-- plate -->
            <g stroke="#b8e0d4" stroke-width="1.200">
              <path fill="#879f96" d="M541 453 763 454.500 1439 458.500 1890 461V507L576 499z"/>
              <path fill="#8ba49b" d="M576 499 1906 507V528L576 520.500z"/>
              <path fill="#404a46" d="M541 453 576 499V520.500L541 477z"/>
            </g>
            <!-- patches -->
            <path fill="#989678" stroke="#c8c490" d="M798 522.500 1500 526V539L798 535.500z"/>
            <path fill="#40443c" d="M789 522.500H798V535z"/>
            <g stroke="#e0d888" stroke-width="1.200">
              <path fill="#a69e64" d="M763 441.500 1427 444.500 1463.500 490 798 487z"/>
              <path fill="#ada265" d="M798 487 1463.500 490V503L798 500z"/>
              <path fill="#4c482c" d="M763 441.500 798 487V500L763 455z"/>
            </g>
            <!-- face label -->
            <path fill="none" stroke="#111" stroke-width="1.500" d="M1219.500 500H1270L1278 514 1270 527H1219.500z"/>
            <text x="1224" y="520" font-size="15">1face</text>
            <!-- ruler -->
            <path fill="#fff" stroke="#333" d="M1001.500 659.500H1447.500V669.500H1001.500z"/>
            <path d="M1001 659H1113V670H1001zM1224 659H1336V670H1224z"/>
            <g font-size="15" text-anchor="middle" fill="#222">
              <text x="1000" y="652">0.000</text><text x="1223" y="652">5.000</text><text x="1467" y="652">10.000 (mm)</text>
              <text x="1112" y="684">2.500</text><text x="1334" y="684">7.500</text>
            </g>
            <!-- triad -->
            <circle cx="1810" cy="607" r="7" fill="#087808"/>
            <text x="1807" y="602" font-size="14" fill="#2ca82c">Y</text>
            <path fill="#1010c0" d="M1814 614V558H1809L1817 540 1825 558H1819V614z"/>
            <path fill="#c01818" d="M1816 612H1871V607L1890 614 1871 621V616H1816z"/>
            <circle cx="1848" cy="575" r="7.500" fill="url(#ball)"/>
            <text x="1901" y="614" font-size="16" fill="#f03030">X</text>
            <text x="1882" y="275" font-size="24" font-weight="bold" fill="#fff">R2</text>
          </svg>
          <div class="caption"><b>B: Coupled Field Harmonic</b><br>1face<br>2025/5/23 12:12<br><br>1face</div>
        </div>
        <div class="view-tabs"><button class="active">Geometry</button><button>Worksheet</button></div>

        <div class="bottom">
          <!-- Selection information -->
          <section class="panel">
            <div class="panel-head">
              <h2>Selection Information</h2><span class="dots"></span>
              <button aria-label="Menu"><i class="caret dark"></i></button><button aria-label="Pin"><svg width="12" height="16"><use href="#pin"/></svg></button><button aria-label="Maximize"><svg width="14" height="14"><use href="#max"/></svg></button><button aria-label="Close"><svg width="12" height="12"><use href="#close"/></svg></button>
            </div>
            <div class="cs-bar">
              <span class="grip"></span>
              <label for="cs">Coordinate System:</label>
              <div class="select"><select id="cs"><option>Global Coordinate Sy</option></select></div>
              <i class="sep"></i>
              <svg width="18" height="18"><use href="#tick-box"/></svg>
              <span class="more"><svg width="8" height="10" viewBox="0 0 8 10"><path fill="none" stroke="#555" stroke-width="1.200" d="M1 1 4 4 7 1M1 5 4 8 7 5"/></svg><i class="caret dark"></i></span>
            </div>
            <div class="no-sel">No Selection</div>
            <div class="gray"></div>
            <div class="hscroll s-info"><svg width="10" height="10"><use href="#left"/></svg><div class="track"><div class="thumb"></div></div><svg width="10" height="10"><use href="#right"/></svg></div>
          </section>

          <!-- Graph -->
          <section class="panel">
            <div class="panel-head">
              <h2>Graph</h2><span class="dots"></span>
              <button aria-label="Menu"><i class="caret dark"></i></button><button aria-label="Pin"><svg width="12" height="16"><use href="#pin"/></svg></button><button aria-label="Maximize"><svg width="14" height="14"><use href="#max"/></svg></button><button aria-label="Close"><svg width="12" height="12"><use href="#close"/></svg></button>
            </div>
            <div class="graph">
              <svg viewBox="1147 767 444 207" preserveAspectRatio="xMinYMin meet">
                <path fill="none" stroke="#222" stroke-width="1.200" d="M1210.500 798.500H1562.500V893.500H1210.500z"/>
                <path stroke="#888" d="M1210.500 894V902M1254.500 894V902M1298.500 894V902M1342.500 894V902M1386.500 894V902M1430.500 894V902M1473.500 894V902M1562.500 894V902"/>
                <path fill="none" stroke="#d01818" stroke-width="1.200" d="M1368 892.500H1387L1422 798 1457 892.500H1510"/>
                <path fill="none" stroke="#149614" stroke-width="1.200" d="M1245 840.500 1280 849 1315 840.500H1351L1387 847 1422 800 1457 893 1492 798.500 1562 799.500"/>
                <g fill="#201010">
                  <path d="M1243.500 839h3v3h-3zM1278.500 847.500h3v3h-3zM1313.500 839h3v3h-3zM1349.500 839h3v3h-3zM1385.500 845.500h3v3h-3zM1420.500 797h3v6h-3zM1455.500 891.500h3v3h-3zM1490.500 797h3v3h-3zM1525.500 797h3v3h-3zM1560.500 798h3v3h-3z"/>
                  <path d="M1243.500 892h3v3h-3zM1278.500 892h3v3h-3zM1313.500 892h3v3h-3zM1349.500 892h3v3h-3zM1385.500 891h3v3h-3zM1490.500 891h3v3h-3zM1525.500 892h3v3h-3zM1560.500 892h3v3h-3z"/>
                </g>
                <g font-size="11" text-anchor="middle" fill="#333">
                  <text x="1207" y="916">100.</text><text x="1250" y="916">112.5</text><text x="1296" y="916">125.</text><text x="1339" y="916">137.5</text>
                  <text x="1384" y="916">150.</text><text x="1428" y="916">162.5</text><text x="1473" y="916">175.</text><text x="1541" y="916">200.</text>
                </g>
                <text x="1388" y="946" font-size="14" font-weight="bold" text-anchor="middle">[Hz]</text>
                <text transform="translate(1189 844) rotate(-90)" font-size="17" font-weight="bold" text-anchor="middle">Normalized</text>
              </svg>
            </div>
          </section>

          <!-- Tabular data -->
          <section class="panel tabular">
            <div class="panel-head">
              <h2>Tabular Data</h2><span class="dots"></span>
              <button aria-label="Menu"><i class="caret dark"></i></button><button aria-label="Pin"><svg width="12" height="16"><use href="#pin"/></svg></button><button aria-label="Maximize"><svg width="14" height="14"><use href="#max"/></svg></button><button aria-label="Close"><svg width="12" height="12"><use href="#close"/></svg></button>
            </div>
            <div class="scroll-area">
              <div class="data-wrap">
                <table class="data">
                  <colgroup><col class="c-num"><col class="c-freq"><col class="c-amp"><col class="c-phase"></colgroup>
                  <thead><tr><th></th><th>Frequency [Hz]</th><th><label class="amp"><input type="checkbox" checked> Amplitude [mV]</label></th><th><input type="checkbox" checked aria-label="Phase"></th></tr></thead>
                  <tbody>
                    <tr><th>1</th><td>110.</td><td>142.39</td><td>19.3</td></tr>
                    <tr><th>2</th><td>120.</td><td>197.66</td><td>-10.</td></tr>
                    <tr><th>3</th><td>130.</td><td>315.94</td><td>20.7</td></tr>
                    <tr><th>4</th><td>140.</td><td>541.49</td><td>22.6</td></tr>
                    <tr><th>5</th><td>150.</td><td>1122.5</td><td>-1.4</td></tr>
                    <tr><th>6</th><td>160.</td><td>63127</td><td>165.</td></tr>
                    <tr><th>7</th><td>170.</td><td>1303.2</td><td>-174</td></tr>
                    <tr><th></th><td></td><td></td><td></td></tr>
                  </tbody>
                </table>
              </div>
              <div class="vscroll s-data"><svg width="10" height="10"><use href="#up"/></svg><div class="track"><div class="thumb"></div></div><svg width="10" height="10"><use href="#down"/></svg></div>
            </div>
            <div class="hscroll s-tab"><svg width="10" height="10"><use href="#left"/></svg><div class="track"><div class="thumb"></div></div><svg width="10" height="10"><use href="#right"/></svg></div>
          </section>
        </div>
      </div>
    </main>

    <footer class="status">
      <span>Ready</span>
      <span class="msg"><svg width="16" height="16" viewBox="0 0 16 16"><circle cx="8" cy="8" r="7" fill="#1030e0" stroke="#9cc4f4"/><path stroke="#fff" stroke-width="2" d="M8 3V5M8 7V13"/></svg>1 Message</span>
      <span>No Selection</span>
      <span>▲ Metric (mm, kg, N, s, mV, mA)</span>
      <span>Degrees</span>
      <span>rad/s</span>
      <span>Celsius</span>
    </footer>

    <!-- Chart gallery -->
    <div class="gallery">
      <button class="big sel"><svg width="36" height="36"><use href="#freq-lg"/></svg><span>Frequency<br>Response<i class="caret in"></i></span></button>
      <button class="big"><svg width="36" height="36"><use href="#phase"/></svg><span>Phase<br>Response<i class="caret in"></i></span></button>
      <button class="big"><svg width="38" height="38" viewBox="0 0 38 38"><path fill="url(#g-fall)" d="M2 1H37L12 34H2z"/><path stroke="#e8e8e8" d="M4 33 14 1M6 33 24 1M8 34 31 1M3 30 8 1"/><path stroke="#c02030" d="M5 33 17 1M7 34 27 1M3 30 11 1"/><path fill="none" stroke="#444" stroke-width="2.500" d="M2 0V36H38"/></svg><span>Waterfall</span><i class="caret"></i></button>
      <button class="big"><svg width="36" height="36" viewBox="0 0 36 36"><path fill="#0c48a8" d="M0 0H36V36H0z"/><path fill="#e83c3c" d="M5 3H15V13H5z"/><path fill="#4c94d4" d="M15 3H25V13H15z"/><path fill="#48c8ff" d="M5 13H15V23H5z"/><path fill="#880404" d="M15 13H25V23H15z"/><path fill="#fcd830" d="M25 20H35V30H25z"/><path fill="none" stroke="#222" stroke-width="2" d="M1 0V35H36"/></svg><span>Contribution</span><i class="caret"></i></button>
    </div>
    <div class="menu main-menu">
      <button><svg width="18" height="18"><use href="#freq"/></svg>Stress</button>
      <button><svg width="18" height="18"><use href="#freq"/></svg>Strain</button>
      <button><svg width="18" height="18"><use href="#freq"/></svg>Deformation</button>
      <button><svg width="18" height="18"><use href="#freq"/></svg>Velocity</button>
      <button><svg width="18" height="18"><use href="#freq"/></svg>Acceleration</button>
      <button><svg width="18" height="18"><use href="#freq"/></svg>Force Reaction</button>
      <hr>
      <button><svg width="18" height="18"><use href="#radiate"/></svg>Equivalent Radiated Power</button>
      <button><svg width="18" height="18" viewBox="0 0 18 18"><use href="#radiate"/><path fill="none" stroke="#444" stroke-width="1.200" d="M14 0V4H17"/></svg>Equivalent Radiated Power Level</button>
      <hr>
      <button class="sub"><i class="blank"></i>Acoustics</button>
      <hr>
      <button disabled><svg width="18" height="18"><use href="#freq-off"/></svg>Krylov Residual Norm</button>
      <hr>
      <button class="sub hot"><i class="blank"></i>Electric</button>
    </div>
    <div class="menu sub-menu">
      <button><svg width="18" height="18"><use href="#freq"/></svg>Voltage</button>
      <button><svg width="18" height="18"><use href="#freq"/></svg>Charge Reaction</button>
      <button><svg width="18" height="18"><use href="#freq"/></svg>Impedance</button>
    </div>

    <!-- Hand-drawn marks -->
    <svg class="marks" width="1912" height="983">
      <g fill="none" stroke="#ed1c24" stroke-width="5">
        <path d="M1670.500 36.500H1734.500V131.500H1670.500z"/>
        <path d="M1579.500 138.500H1686.500V229.500H1579.500z"/>
        <path d="M95.500 388.500H247.500V410.500H95.500z"/>
        <path d="M96.500 450.500H244.500V470.500H96.500z"/>
        <path d="M123.500 611.500H220.500V635.500H123.500z"/>
        <path d="M12 720H513V751H12z"/>
        <path d="M1393.500 503.500H1533.500V548.500H1393.500z"/>
        <path d="M1595.500 514.500H1896.500V552.500H1595.500z"/>
      </g>
      <g fill="none" stroke="#ed1c24" stroke-width="5" stroke-linecap="round" stroke-linejoin="round">
        <path d="M95 450 63 394Q50 370 51 357 54 343 70 336 88 330 125 332 150 333 173 337L520 397 836 459"/>
        <path d="M250 412 520 470 823 535"/>
        <path stroke-width="4" d="M1371 551 1350 560 1333 566 1310 576 1287 583 1262 594 1242 603 1168 620 1150 622 1129 629 1060 641 1020 649 975 659 959 660 915 670 898 674 873 683 852 689 834 692 748 708 723 714 706 717H556L525 725"/>
        <path stroke-width="4" d="M549 700 536 712 525 725 543 731 557 741"/>
        <path stroke-width="4" d="M347 695 352 682 365 657 380 634 395 609 398 612 397 690 394 703 386 699 370 675 358 652 353 638 347 628 357 630 376 640 396 652 413 660 418 666 412 671 390 673 365 678 350 687 338 692"/>
      </g>
      <g fill="none" stroke="#000" stroke-width="4.500" stroke-linejoin="round">
        <path d="M1112 484V454H1105Q1113 440 1118.500 424 1124 442 1132 453H1125V484z"/>
        <path d="M1107 537V520H1100Q1108 514 1112 504 1117 514 1124 520H1117V537z"/>
      </g>
      <g class="hand" font-size="27" font-weight="bold" fill="#ed1c24">
        <text x="1156" y="434">极化方向</text>
        <text x="1148" y="551">极化方向</text>
      </g>
    </svg>
  </div>
</body>
</html>
```

FILE: styles.css
```css
* {
  box-sizing: border-box;
}

body {
  margin: 0;
  font-family: "Open Sans", "Noto Sans", "Noto Sans CJK SC", sans-serif;
  font-size: 14px;
  line-height: 18px;
  color: #1e1e1e;
  background-color: #eeeef2;
}

button, input, select {
  font: inherit;
  color: inherit;
}

button {
  border: none;
  padding: 0;
  background: none;
  white-space: nowrap;
}

h2, h3 {
  margin: 0;
  font-weight: normal;
}

svg {
  display: block;
  flex: none;
  overflow: visible;
}

.defs {
  position: absolute;
}

.app {
  position: relative;
  display: grid;
  grid-template-rows: 36px 112px 1fr 9px;
  grid-template-columns: minmax(0, 1fr);
  height: 100vh;
  overflow: hidden;
}

.caret {
  flex: none;
  display: block;
  width: 0;
  height: 0;
  border: 4px solid transparent;
  border-top-color: #777;
  border-bottom: none;
}

.caret.dark {
  border-width: 5px 5px 0;
  border-top-color: #222;
}

.caret.in {
  display: inline-block;
  margin-left: 3px;
  vertical-align: 3px;
}

/* tabs */
.tabs {
  display: flex;
  gap: 7px;
  padding-top: 3px;
  border-bottom: 1px solid #ccc;
  background-color: #eeeef0;
}

.tab {
  padding: 0 15px;
}

.tab.file {
  width: 70px;
  margin-right: 5px;
  background-color: #0072c6;
  color: white;
}

.tab.active {
  margin-bottom: -1px;
  padding: 0 14px;
  border: 1px solid #ccc;
  border-bottom: none;
  background-color: #fafafa;
}

.quick {
  display: flex;
  align-items: center;
  margin-left: auto;
  margin-right: -8px;
  gap: 5px;
}

.quick input {
  width: 200px;
  height: 26px;
  padding: 0 5px;
  border: 1px solid #ccccdc;
  background-color: white;
}

.quick .help {
  margin-left: 3px;
}

.quick .caret {
  margin-left: -3px;
}

.quick .collapse {
  margin-left: 5px;
}

::placeholder {
  color: #999;
  opacity: 1;
}

/* ribbon */
.ribbon {
  display: flex;
  padding: 7px 0 8px;
  border-bottom: 1px solid #c8c8cc;
  background-color: #fafafa;
}

.group {
  position: relative;
  display: flex;
  flex-direction: column;
  justify-content: space-between;
  border-right: 1px solid #ccc;
}

.group-body {
  display: flex;
}

.group h3 {
  font-size: 13px;
  text-align: center;
  color: #777;
}

.g-outline { width: 112px; }
.g-solve { width: 290px; }
.g-insert { width: 662px; }
.g-results { width: 413px; }
.g-one { width: 55px; }
.g-probe { width: 66px; }
.g-toolbox { width: 74px; }

.big {
  display: flex;
  flex-direction: column;
  align-items: center;
  min-width: 52px;
  padding: 2px 3px 0;
}

.big > .caret {
  margin-top: 12px;
}

.big svg {
  height: 37px;
}

.off {
  color: #aaa;
}

.pressed {
  color: #555;
}

.pressed > .caret {
  opacity: .3;
}

.g-outline .group-body {
  padding-left: 9px;
  gap: 4px;
}

.mini {
  display: flex;
  flex-direction: column;
  gap: 17px;
  padding-top: 11px;
}

.mini button {
  display: flex;
  justify-content: center;
  width: 18px;
}

.fields {
  width: 156px;
  padding-left: 7px;
}

.select {
  position: relative;
}

.select::after {
  content: "";
  position: absolute;
  right: 4px;
  top: 50%;
  margin-top: -2px;
  border: 4px solid transparent;
  border-top-color: #777;
  border-bottom: none;
  pointer-events: none;
}

.select select {
  appearance: none;
  width: 100%;
  height: 28px;
  padding: 0 3px;
  border: 1px solid #ccccdc;
  border-radius: 0;
  background-color: white;
}

.fields .select {
  width: 150px;
  margin: -2px 0 4px;
}

.fields .select select {
  height: 26px;
}

.dist {
  display: flex;
  align-items: center;
  gap: 9px;
  height: 20px;
  padding-left: 3px;
}

.cores {
  display: flex;
  align-items: center;
  gap: 4px;
  padding: 4px 0 0 2px;
}

.cores input {
  width: 58px;
  height: 26px;
  padding: 0 4px;
  border: 1px solid #ccccdc;
}

input[type="checkbox"] {
  appearance: none;
  flex: none;
  position: relative;
  width: 16px;
  height: 16px;
  margin: 0;
  border: 1px solid #ccccdc;
  background-color: white;
}

input[type="checkbox"]::after {
  content: "";
  position: absolute;
  left: 4px;
  top: 1px;
  width: 5px;
  height: 9px;
  border: solid #555;
  border-width: 0 2px 2px 0;
  transform: rotate(40deg);
}

.launcher {
  position: absolute;
  right: 4px;
  bottom: 2px;
}

.cols {
  display: grid;
  grid-template-columns: 152px 119px 93px 119px;
  grid-auto-rows: 35px;
  margin: 1px 0 0 8px;
}

.g-insert .group-body {
  padding-left: 8px;
}

.g-insert .big {
  width: 57px;
}

.item {
  display: flex;
  align-items: center;
  gap: 2px;
}

.item .caret {
  margin-left: 1px;
}

.annotation {
  height: 73px;
}

.g-results .group-body {
  padding-left: 4px;
}

.g-results .big:first-child {
  width: 92px;
}

/* panels */
.workspace {
  display: grid;
  grid-template-columns: 524px minmax(0, 1fr);
  column-gap: 6px;
  min-height: 0;
}

.side {
  display: grid;
  grid-template-rows: 490px minmax(0, 1fr);
  row-gap: 5px;
  min-height: 0;
}

.panel {
  display: flex;
  flex-direction: column;
  min-width: 0;
  min-height: 0;
}

.panel-head {
  flex: none;
  display: flex;
  align-items: center;
  height: 27px;
  padding: 0 5px 2px 6px;
  border: 1px solid #ccccdc;
  border-bottom: none;
  font-size: 15px;
  color: #555;
}

.panel-head h2 {
  font-size: 15px;
  white-space: nowrap;
}

.panel-head button {
  display: flex;
  justify-content: center;
  width: 20px;
}

.dots {
  flex: 1;
  height: 7px;
  margin: 0 2px 0 6px;
}

.dots, .grip {
  background-image: radial-gradient(circle at 1px 1px, #bbb 1px, transparent 1px), radial-gradient(circle at 3px 3px, #bbb 1px, transparent 1px);
  background-size: 4px 4px;
}

.grip {
  flex: none;
  width: 7px;
  height: 22px;
}

.filter {
  display: flex;
  align-items: center;
  height: 34px;
  padding-left: 12px;
  font-size: 15px;
}

.filter .select {
  width: 125px;
  margin-left: 9px;
}

.filter input {
  width: 112px;
  height: 28px;
  padding: 0 4px;
  border: 1px solid #ccccdc;
}

.filter .expand {
  margin: 0 10px 4px 6px;
}

.filter .caret {
  margin-top: 10px;
}

.scroll-area {
  flex: 1;
  display: flex;
  min-height: 0;
  background-color: white;
}

.vscroll {
  flex: none;
  display: flex;
  flex-direction: column;
  align-items: center;
  width: 19px;
  padding: 6px 0;
  gap: 5px;
  background-color: #f0f0f0;
}

.hscroll {
  flex: none;
  display: flex;
  align-items: center;
  height: 20px;
  padding: 0 5px;
  gap: 6px;
  background-color: #f0f0f0;
}

.track {
  flex: 1;
  align-self: stretch;
  display: flex;
}

.vscroll .track {
  flex-direction: column;
}

.thumb {
  background-color: #cdcdcd;
}

.s-tree .thumb { height: 73%; margin-top: auto; }
.s-details .thumb { height: 79%; }
.s-data .thumb { height: 69%; }
.s-info .thumb { width: 84%; }
.s-tab .thumb { width: 72%; }

/* tree */
.tree {
  flex: 1;
  padding: 0;
  font-size: 13px;
}

.tree, .tree ul {
  margin: 0;
  list-style-type: none;
}

.tree {
  padding-left: 44px;
}

.tree ul {
  padding-left: 34px;
}

.tree ul.deep {
  padding-left: 68px;
}

.tree li {
  position: relative;
}

.tree li::before {
  content: "";
  position: absolute;
  left: 5px;
  top: 0;
  bottom: 0;
  border-left: 1px dotted #888;
}

.tree li:last-child::before {
  bottom: auto;
  height: 10px;
}

.row {
  display: flex;
  align-items: center;
  height: 20px;
  white-space: nowrap;
}

.row svg:first-of-type {
  margin: 6px 1px 0 0;
}

.row span {
  margin-left: 5px;
  padding: 0 2px;
}

.row.bold {
  font-weight: bold;
  font-size: 14px;
}

.row.cjk {
  font-size: 15px;
  font-family: "Noto Sans CJK SC", sans-serif;
}

.current span {
  background-color: #f0f0f0;
}

.box {
  position: relative;
  flex: none;
  width: 11px;
  height: 11px;
  border: 1px solid #777;
  background-color: white;
  font-size: 12px;
  line-height: 8px;
  text-align: center;
}

.dash, .stub {
  width: 12px;
  border-top: 1px dotted #888;
}

.stub {
  width: 17px;
  margin-left: 6px;
}

/* details */
.props-wrap {
  flex: 1;
  overflow: hidden;
}

.props {
  table-layout: fixed;
  width: 504px;
  border-collapse: collapse;
}

.c-exp { width: 18px; }
.c-name { width: 149px; }

.props td, .props th {
  height: 26px;
  padding: 0 0 2px 4px;
  border: 1px solid #a0a0a0;
  text-align: left;
  white-space: nowrap;
}

.props .cat td, .props .cat th {
  height: 27px;
}

.props td:first-child {
  padding: 0 0 0 2px;
  border: none;
}

.props .box {
  display: block;
  width: 12px;
  height: 12px;
  font-size: 12px;
  line-height: 9px;
}

.props .ro {
  background-color: #e7e6e2;
}

/* graphics area */
.center {
  display: grid;
  grid-template-rows: 34px minmax(0, 1fr) 31px 234px;
  min-width: 0;
  min-height: 0;
}

.toolbar {
  display: flex;
  align-items: center;
  padding-left: 11px;
  overflow: hidden;
  font-size: 15px;
  white-space: nowrap;
}

.toolbar .grip {
  margin-right: 9px;
}

.toolbar button {
  flex: none;
  display: flex;
  align-items: center;
  justify-content: center;
  width: 27px;
  height: 28px;
  border: 1px solid transparent;
}

.toolbar > .caret {
  margin: 0 4px;
}

.toolbar .on {
  border-color: #3c9cf0;
  background-color: #e6f1fb;
}

.toolbar .wide {
  width: auto;
  gap: 4px;
  padding: 0 12px 0 9px;
}

.toolbar .clip {
  padding: 0 6px 0 8px;
  font-size: 16px;
}

.toolbar .text {
  padding: 0 0 0 8px;
}

.toolbar .clip + .text {
  padding-left: 12px;
}

.sep {
  flex: none;
  width: 1px;
  height: 26px;
  margin: 0 3px 0 4px;
  background-color: #ccccd8;
}

.viewport {
  position: relative;
  overflow: hidden;
  background-image: linear-gradient(#6b8bdd, #a5b9ea 42%, #dbe2f6 68%, #f2f5fd 84%, #fff);
}

.scene {
  width: 100%;
  height: 100%;
}

.caption {
  position: absolute;
  left: 20px;
  top: 20px;
  font-size: 15px;
  line-height: 21px;
  color: #111;
}

.view-tabs {
  display: flex;
  align-items: flex-start;
  border-top: 1px solid #ccccdc;
}

.view-tabs button {
  height: 25px;
  padding: 0 8px 5px;
  font-size: 15px;
  color: #444;
}

.view-tabs .active {
  margin-top: -1px;
  border: 1px solid #ccccdc;
  border-top: none;
  background-color: #f6f6f8;
  color: #0e80d8;
}

.bottom {
  display: grid;
  grid-template-columns: 611fr 444fr 315fr;
  column-gap: 6px;
}

.cs-bar {
  display: flex;
  align-items: center;
  height: 34px;
  padding: 0 6px 0 12px;
  font-size: 15px;
  white-space: nowrap;
}

.cs-bar label {
  width: 152px;
  padding-left: 11px;
}

.cs-bar .select {
  width: 178px;
  margin-left: 4px;
  font-size: 16px;
}

.cs-bar .sep + svg {
  margin-left: 6px;
}

.more {
  display: flex;
  flex-direction: column;
  align-items: center;
  gap: 6px;
  margin-left: auto;
}

.no-sel {
  height: 21px;
  padding: 1px 4px;
  background-color: #f6f6f6;
  border-bottom: 1px solid #777;
}

.gray {
  flex: 1;
  background-color: #a0a0a0;
}

.graph {
  flex: 1;
  min-height: 0;
  background-color: white;
}

/* tabular data */
.tabular {
  margin-right: -8px;
}

.data-wrap {
  flex: 1;
  overflow: hidden;
}

.data {
  table-layout: fixed;
  width: 312px;
  border-collapse: collapse;
}

.c-num { width: 25px; }
.c-freq { width: 111px; }
.c-amp { width: 139px; }
.c-phase { width: 37px; }

.data th, .data td {
  height: 22px;
  padding: 0 4px;
  border: 1px solid #aaa;
  text-align: left;
  font-weight: normal;
  overflow: hidden;
  white-space: nowrap;
}

.data tr:nth-child(even) td {
  height: 23px;
}

.data th {
  background-color: #f4f4f4;
}

.data tbody th {
  padding: 0 3px;
  border-color: #777;
}

.data td {
  background-color: #e1e5e8;
}

.data thead th {
  border-top: none;
}

.data input[type="checkbox"] {
  border-color: #666 #ddd #ddd #666;
  border-width: 2px 1px 1px 2px;
}

.data input[type="checkbox"]::after {
  top: 0;
  border-color: #111;
}

.data thead input {
  display: block;
}

.amp {
  display: flex;
  align-items: center;
  gap: 7px;
  color: #d01020;
}

.status {
  display: flex;
  align-items: flex-start;
  gap: 32px;
  padding: 2px 10px;
  overflow: hidden;
  background-color: #007acc;
  color: white;
  white-space: nowrap;
}

.status .msg {
  display: flex;
  gap: 6px;
  margin-left: auto;
}

/* popups */
.gallery {
  position: absolute;
  left: 1592px;
  top: 143px;
  right: -8px;
  height: 105px;
  display: flex;
  align-items: flex-start;
  padding: 1px 4px;
  border: 1px solid #ccccdc;
  background-color: #fafafa;
}

.gallery .big {
  width: 74px;
  height: 78px;
  padding-top: 4px;
}

.gallery .sel {
  width: 81px;
  color: white;
  background-color: #007acc;
}

.gallery .sel .caret {
  border-top-color: white;
}

.gallery .big:last-child {
  width: 84px;
}

.menu {
  position: absolute;
  padding: 1px 1px 2px 0;
  border: 1px solid #ccccdc;
  background-color: #f6f6f6;
  box-shadow: 4px 4px 4px rgba(0, 0, 0, .45);
}

.main-menu {
  left: 1596px;
  top: 223px;
  width: 300px;
}

.sub-menu {
  left: 1403px;
  top: 515px;
  width: 195px;
}

.menu button {
  display: flex;
  align-items: center;
  gap: 17px;
  width: 100%;
  height: 27px;
  padding: 0 9px;
}

.menu button:nth-child(even) {
  height: 28px;
}

.menu button:disabled {
  color: #aaa;
}

.menu hr {
  height: 1px;
  margin: 1px 0 2px 44px;
  border: none;
  background-color: #dcdce0;
}

.blank {
  width: 18px;
}

.menu .sub::after {
  content: "";
  margin-left: auto;
  border: 5px solid transparent;
  border-left-color: #777;
  border-right: none;
}

.menu .hot {
  background-color: #c9def5;
}

.menu .hot::after {
  border-left-color: #0080e0;
}

.marks {
  position: absolute;
  left: 0;
  top: 0;
  pointer-events: none;
}

.hand {
  font-family: "Noto Sans CJK SC", sans-serif;
}
```
